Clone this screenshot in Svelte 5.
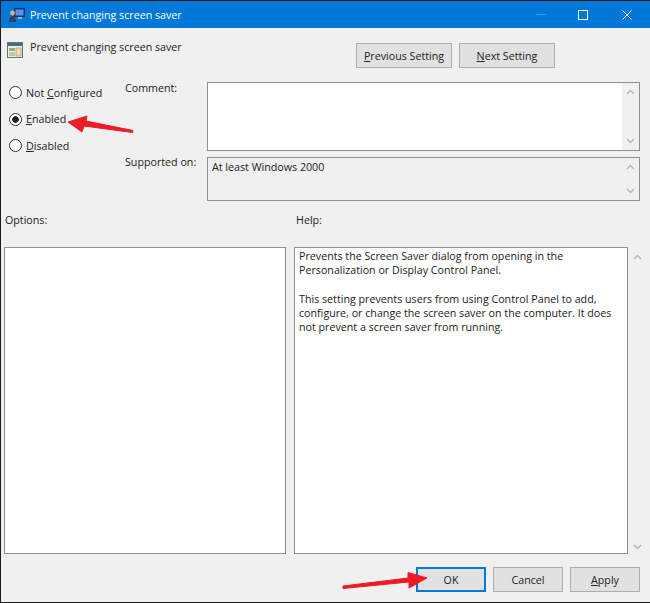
<script>
  const radios = [
    { key: 'N', before: 'Not ', access: 'C', after: 'onfigured', checked: false },
    { key: 'E', before: '', access: 'E', after: 'nabled', checked: true },
    { key: 'D', before: '', access: 'D', after: 'isabled', checked: false }
  ];
</script>

{#snippet chevrons()}
  <svg width="9" height="6" viewBox="0 0 9 6"><path d="M1 5 L4.5 1.5 L8 5" /></svg>
  <svg width="9" height="6" viewBox="0 0 9 6"><path d="M1 1 L4.5 4.5 L8 1" /></svg>
{/snippet}

<div class="window">
  <div class="titlebar">
    <svg class="app-icon" width="16" height="16" viewBox="0 0 16 16">
      <rect x="5" y="1" width="11" height="9" fill="#1c2f6e" />
      <rect x="6.5" y="2.5" width="8" height="6" fill="#5d8fe8" />
      <rect x="9" y="10" width="4" height="2" fill="#9fb0c8" />
      <circle cx="3.5" cy="6" r="2.4" fill="#d8b080" />
      <path class="solid" d="M0 15 Q0 9 3.5 9 Q7 9 7 15 Z" />
    </svg>
    <span class="title">Prevent changing screen saver</span>
    <div class="controls">
      <span class="min"></span>
      <span class="max"></span>
      <svg width="10" height="10" viewBox="0 0 10 10"><path d="M0.5 0.5 L9.5 9.5 M9.5 0.5 L0.5 9.5" /></svg>
    </div>
  </div>

  <div class="header">
    <svg class="policy-icon" width="16" height="16" viewBox="0 0 16 16">
      <rect x="0.5" y="0.5" width="15" height="15" fill="#eef0e6" stroke="#5f7480" />
      <rect x="1" y="1" width="14" height="3" fill="#3f6f78" />
      <rect x="2" y="6" width="6" height="3" fill="#8fb27a" />
      <rect x="9" y="6" width="5" height="8" fill="#f0dfa8" stroke="#8a8a70" stroke-width="0.6" />
      <rect x="2" y="10" width="6" height="4" fill="#c9c1a0" />
    </svg>
    <span class="policy-name">Prevent changing screen saver</span>
    <div class="nav">
      <button><u>P</u>revious Setting</button>
      <button><u>N</u>ext Setting</button>
    </div>
  </div>

  <div class="settings">
    <div class="radios">
      {#each radios as r}
        <div class="radio">
          <span class="dot" class:checked={r.checked}></span>
          <span>{r.before}<u>{r.access}</u>{r.after}</span>
        </div>
      {/each}
    </div>
    <span class="comment-label">Comment:</span>
    <div class="box comment">
      <div class="box-text"></div>
      <div class="scrollbar">{@render chevrons()}</div>
    </div>
    <span class="supported-label">Supported on:</span>
    <div class="box supported">
      <div class="box-text">At least Windows 2000</div>
      <div class="scrollbar">{@render chevrons()}</div>
    </div>
  </div>

  <div class="pane-labels">
    <span>Options:</span>
    <span>Help:</span>
  </div>

  <div class="panes">
    <div class="options"></div>
    <div class="help">
      <p>Prevents the Screen Saver dialog from opening in the<br />Personalization or Display Control Panel.</p>
      <p>This setting prevents users from using Control Panel to add,<br />configure, or change the screen saver on the computer. It does<br />not prevent a screen saver from running.</p>
    </div>
    <div class="help-scroll">{@render chevrons()}</div>
  </div>

  <div class="footer">
    <button class="default">OK</button>
    <button>Cancel</button>
    <button><u>A</u>pply</button>
  </div>

  <!-- red annotation arrows drawn over the dialog -->
  <svg class="annotations" width="650" height="603" viewBox="0 0 650 603">
    <path d="M133 130.5 L86 121 L87 116 L68 122 L82 132 L84 126 L132.5 132.5 Z" />
    <path d="M343 586 L408 578 L408 572.5 L427 578 L409 588 L409 582 L343 588.5 Z" />
  </svg>
</div>

<style>
  :global(body) {
    margin: 0;
    background: #f0f0f0;
  }

  .window {
    position: relative;
    box-sizing: border-box;
    width: 650px;
    height: 603px;
    background: #f0f0f0;
    border-top: 1px solid #1a1a1a;
    border-left: 1px solid #1a1a1a;
    border-bottom: 1px solid #1a1a1a;
    font-family: "Open Sans", "Noto Sans", sans-serif;
    font-size: 10.7px;
    color: #222;
    overflow: hidden;
  }

  .titlebar {
    display: flex;
    align-items: center;
    height: 27px;
    background: #0078d7;
    color: #fff;
    padding-left: 8px;
  }

  .title {
    margin-left: 5px;
  }

  .controls {
    display: flex;
    align-items: center;
    margin-left: auto;
    margin-right: 18px;
    gap: 34px;
  }

  .controls svg path {
    stroke: #fff;
    stroke-width: 1;
    fill: none;
  }

  .min {
    width: 10px;
    height: 1px;
    margin-right: -2px;
    background: #3f9ae2;
  }

  .max {
    width: 8px;
    height: 8px;
    border: 1px solid #fff;
  }

  .header {
    display: flex;
    align-items: flex-start;
    height: 54px;
    padding-left: 6px;
  }

  .policy-icon {
    margin-top: 14px;
  }

  .policy-name {
    margin-left: 7px;
    margin-top: 12px;
  }

  .nav {
    display: flex;
    gap: 7px;
    margin-left: auto;
    margin-right: 95px;
    margin-top: 15px;
  }

  button {
    box-sizing: border-box;
    height: 25px;
    padding: 0;
    background: #e1e1e1;
    border: 1px solid #adadad;
    font: inherit;
    color: inherit;
  }

  .nav button {
    width: 96px;
  }

  .settings {
    display: grid;
    grid-template-columns: 120px 82px 433px;
    grid-template-rows: 69px 44px;
    row-gap: 6px;
    padding-left: 4px;
  }

  .radios {
    grid-row: 1 / span 2;
    padding-left: 4px;
    display: flex;
    flex-direction: column;
    gap: 9.5px;
    padding-top: 2px;
  }

  .radio {
    display: flex;
    align-items: center;
    gap: 4px;
    height: 17px;
  }

  .dot {
    box-sizing: border-box;
    width: 13px;
    height: 13px;
    border: 1px solid #333;
    border-radius: 50%;
    background: #fff;
  }

  .dot.checked {
    background: radial-gradient(circle, #222 0 3px, #fff 3.6px);
  }

  .comment-label {
    grid-column: 2;
    grid-row: 1;
    margin-top: -1px;
  }

  .supported-label {
    grid-column: 2;
    grid-row: 2;
    margin-top: -2px;
  }

  .box {
    display: flex;
    box-sizing: border-box;
    border: 1px solid #8f8f8f;
  }

  .box-text {
    flex: 1;
    padding: 2px 4px;
  }

  .comment {
    grid-column: 3;
    grid-row: 1;
    background: #fff;
  }

  .supported {
    grid-column: 3;
    grid-row: 2;
    background: #f0f0f0;
  }

  .scrollbar {
    display: flex;
    flex-direction: column;
    align-items: center;
    justify-content: space-between;
    width: 17px;
    padding: 6px 0;
    background: #f0f0f0;
    box-sizing: border-box;
  }

  svg path {
    stroke: #b4b4b4;
    stroke-width: 1.4;
    fill: none;
  }

  svg path.solid {
    stroke: none;
    fill: #33405c;
  }

  .annotations path {
    stroke: #ed1c24;
    stroke-width: 1;
    stroke-linejoin: round;
    fill: #ed1c24;
  }

  .pane-labels {
    display: grid;
    grid-template-columns: 291px 1fr;
    padding-left: 4px;
    padding-top: 1px;
    margin-top: 11px;
    height: 34px;
  }

  .panes {
    display: grid;
    grid-template-columns: 282px 334px 17px;
    column-gap: 8px;
    padding-left: 3px;
    height: 307px;
  }

  .options,
  .help {
    box-sizing: border-box;
    background: #fff;
    border: 1px solid #8f8f8f;
  }

  .help {
    padding: 1px 4px;
    line-height: 14.3px;
  }

  .help p {
    margin: 0 0 14.3px;
  }

  .help-scroll {
    display: flex;
    flex-direction: column;
    align-items: center;
    justify-content: space-between;
    margin-left: -7px;
    margin-right: 7px;
    padding: 7px 0 4px;
  }

  .footer {
    display: flex;
    justify-content: flex-end;
    gap: 7px;
    margin-top: 13px;
    margin-right: 10px;
  }

  .footer button {
    width: 70px;
  }

  .default {
    border: 2px solid #0078d7;
  }

  .annotations {
    position: absolute;
    left: -1px;
    top: -1px;
    pointer-events: none;
  }
</style>
